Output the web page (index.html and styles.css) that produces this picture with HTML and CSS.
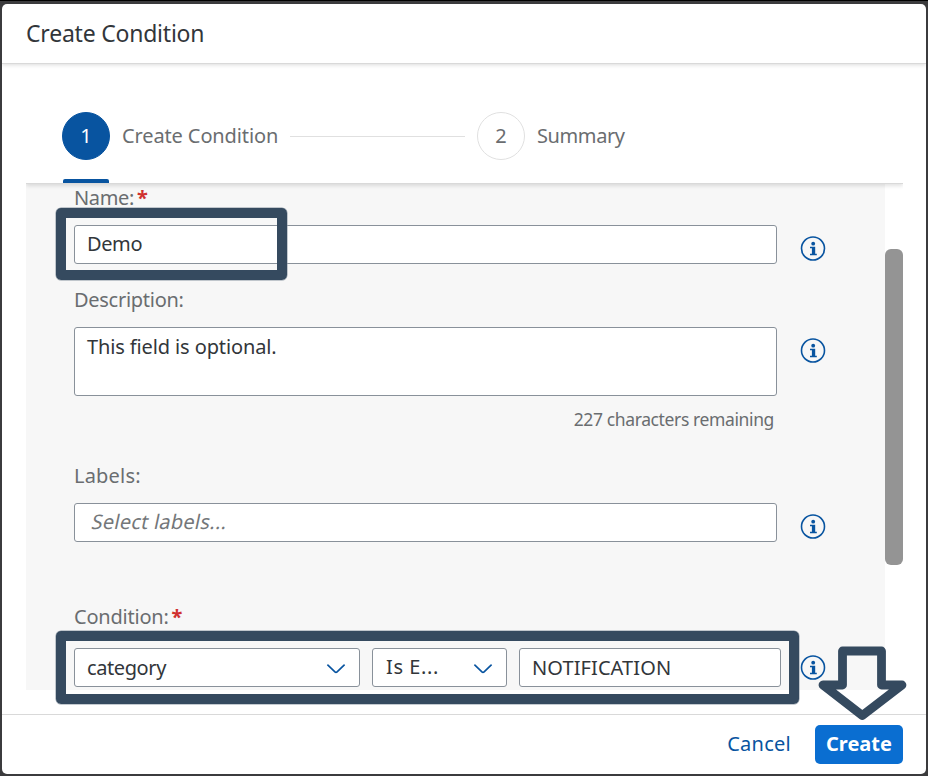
FILE: index.html
```html
<!DOCTYPE html>
<html lang="en">
<head>
<meta charset="utf-8">
<title>Create Condition</title>
<link rel="stylesheet" href="styles.css">
</head>
<body>
<svg width="0" height="0" class="defs" aria-hidden="true">
  <symbol id="info" viewBox="0 0 26 26">
    <circle cx="13" cy="12.500" r="11.500" fill="none" stroke="currentColor" stroke-width="1.600"/>
    <circle cx="13.200" cy="7.700" r="1.900" fill="currentColor"/>
    <path d="M10 10.700h5.200v7h1.600v1.500H10v-1.500h1.900v-5.500H10z" fill="currentColor"/>
  </symbol>
  <symbol id="chevron" viewBox="0 0 20 12">
    <path d="M1.400 1.600L8.900 8.900Q10 10 11.100 8.900L18.600 1.600" fill="none" stroke="currentColor" stroke-width="1.600"/>
  </symbol>
</svg>
<div class="dialog">
  <header class="header"><h1 class="title">Create Condition</h1></header>
  <main class="main">
    <nav class="steps">
      <div class="step active"><span class="num">1</span><span class="step-name t-step1">Create Condition</span></div>
      <span class="line"></span>
      <div class="step"><span class="num">2</span><span class="step-name t-step2">Summary</span></div>
    </nav>
    <div class="scroller">
      <form class="form">
        <label class="label name"><span class="t-name">Name:</span><b class="req">*</b></label>
        <div class="row"><div class="input wide"><span class="t-demo">Demo</span></div><svg class="info"><use href="#info"/></svg></div>
        <label class="label desc"><span class="t-desc">Description:</span></label>
        <div class="row"><div class="input wide area"><span class="t-opt">This field is optional.</span></div><svg class="info"><use href="#info"/></svg></div>
        <div class="counter">227 characters remaining</div>
        <label class="label labels"><span class="t-labels">Labels:</span></label>
        <div class="row"><div class="input wide placeholder"><span class="t-select">Select labels...</span></div><svg class="info"><use href="#info"/></svg></div>
        <label class="label cond"><span class="t-cond">Condition:</span><b class="req">*</b></label>
        <div class="row">
          <div class="input category"><span class="t-cat">category</span><svg class="chevron"><use href="#chevron"/></svg></div>
          <div class="input operator"><span class="t-is">Is E...</span><svg class="chevron"><use href="#chevron"/></svg></div>
          <div class="input value"><span class="t-value">NOTIFICATION</span></div>
          <svg class="info"><use href="#info"/></svg>
        </div>
      </form>
      <div class="track"><div class="thumb"></div></div>
    </div>
  </main>
  <footer class="footer"><span class="cancel">Cancel</span><span class="create">Create</span></footer>
</div>
<div class="mark mark-name"></div>
<div class="mark mark-cond"></div>
<svg class="arrow" viewBox="0 0 92 78"><path d="M24.500 7h39V41H84L44.300 71.500L5 41H24.500z" fill="none" stroke="#354a5f" stroke-width="8.800" stroke-linejoin="round"/></svg>
</body>
</html>
```
FILE: styles.css
```css
* { box-sizing: border-box; }
body {
  margin: 0;
  width: 928px;
  height: 776px;
  padding: 3px 2px 2px;
  overflow: hidden;
  background: #3b3b3d;
  border-top: 1px solid #000;
  font: 20px/24px "Noto Sans", "Open Sans", sans-serif;
  color: #32363a;
}
.defs { position: absolute; }
.dialog {
  height: 770px;
  display: flex;
  flex-direction: column;
  background: #fff;
  border-radius: 5px;
  overflow: hidden;
}
.header {
  position: relative;
  z-index: 2;
  height: 60px;
  flex: none;
  display: flex;
  align-items: center;
  padding: 0 0 2px 24px;
  border-bottom: 1px solid #d9d9d9;
  box-shadow: 0 1px 4px rgba(0, 0, 0, .14);
}
.title { margin: 0; font-size: 23px; font-weight: 400; line-height: 30px; letter-spacing: -.22px; }
.main { height: 650px; padding: 0 24px; }
.steps {
  position: relative;
  z-index: 1;
  height: 120px;
  display: flex;
  align-items: center;
  padding: 24px 0 0 36px;
  background: #fff;
  border-bottom: 1px solid #d9d9d9;
  box-shadow: 0 2px 4px rgba(0, 0, 0, .12);
  clip-path: inset(0 0 -8px 0);
  width: 877px;
  color: #6a6d70;
}
.step { position: relative; display: flex; align-items: center; gap: 12px; height: 48px; }
.num {
  width: 48px;
  height: 48px;
  padding-top: 1px;
  border: 1px solid #e0e0e0;
  border-radius: 50%;
  display: flex;
  align-items: center;
  justify-content: center;
}
.active .num { background: #0854a0; border-color: #0854a0; color: #fff; }
.active::after {
  content: "";
  position: absolute;
  left: 1px;
  bottom: -23px;
  width: 46px;
  height: 4px;
  background: #0854a0;
  border-radius: 2px 2px 0 0;
}
.step-name { white-space: nowrap; }
.t-step1 { width: 156px; letter-spacing: -.12px; }
.t-step2 { letter-spacing: -.4px; }
.line { width: 175px; height: 1px; background: #e0e0e0; margin: 1px 12px 0; }
.scroller { display: flex; height: 506px; width: 877px; }
.form { width: 859px; padding: 2px 0 0 48px; background: #f7f7f7; }
.label { display: flex; height: 24px; color: #6a6d70; white-space: nowrap; }
.t-name { letter-spacing: -.35px; }
.t-demo { letter-spacing: -.4px; }
.t-desc { letter-spacing: -.28px; }
.t-opt { position: relative; top: 1px; letter-spacing: -.12px; }
.t-labels { letter-spacing: .2px; }
.t-cond { letter-spacing: -.22px; }
.t-select { display: inline-block; font-style: normal; letter-spacing: .24px; transform: skewX(-12deg); }
.t-cat { letter-spacing: -.4px; }
.t-is { letter-spacing: .6px; margin-left: 1px; }
.t-value { letter-spacing: .1px; }
.cond + .row .input { padding-top: 7px; }
.cond + .row .operator { padding-top: 6px; }
.desc { margin-top: 24px; }
.labels { margin-top: 33px; }
.cond { margin-top: 63px; }
.req { color: #d0302f; margin-left: 3px; font-size: 20px; line-height: 23px; }
.row { display: flex; margin-top: 15px; }
.cond + .row { margin-top: 19px; }
.input {
  height: 39px;
  border: 1px solid #89919a;
  border-radius: 3px;
  background: #fff;
  padding: 6px 12px;
  white-space: nowrap;
}
.wide { width: 703px; }
.area { height: 69px; }
.placeholder { color: #74777a; padding-left: 17px; }
.category { width: 286px; display: flex; justify-content: space-between; }
.operator { width: 135px; margin-left: 12px; display: flex; justify-content: space-between; }
.value { width: 262px; margin-left: 12px; }
.chevron { width: 20px; height: 12px; margin: 7px 1px 0 0; color: #0854a0; }
.operator .chevron { margin-top: 8px; }
.info { width: 26px; height: 26px; margin: 11px 0 0 23px; color: #0854a0; }
.cond + .row .info { margin: 7px 0 0 19px; }
.counter { width: 700px; height: 24px; margin-top: 11px; text-align: right; font-size: 17.500px; letter-spacing: -.38px; color: #6a6d70; white-space: nowrap; }
.track { width: 18px; padding-top: 65px; background: #fff; }
.thumb { height: 316px; border-radius: 6px; background: #949494; }
.footer {
  height: 60px;
  border-top: 1px solid #d9d9d9;
  padding: 10px 23px 0 0;
  display: flex;
  justify-content: flex-end;
  gap: 24px;
  line-height: 37px;
}
.cancel { color: #0854a0; letter-spacing: .25px; }
.create { width: 88px; height: 39px; border-radius: 5px; background: #0a6ed1; color: #fff; font-weight: 700; text-align: center; }
.mark { position: absolute; z-index: 2; border: 10px solid #354a5f; border-radius: 5px; box-shadow: 0 0 0 .5px #8995a1; }
.mark-name { left: 56px; top: 208px; width: 231px; height: 72px; }
.mark-cond { left: 56px; top: 631px; width: 743px; height: 73px; }
.arrow { position: absolute; z-index: 2; left: 818px; top: 644px; width: 92px; height: 78px; }
```
